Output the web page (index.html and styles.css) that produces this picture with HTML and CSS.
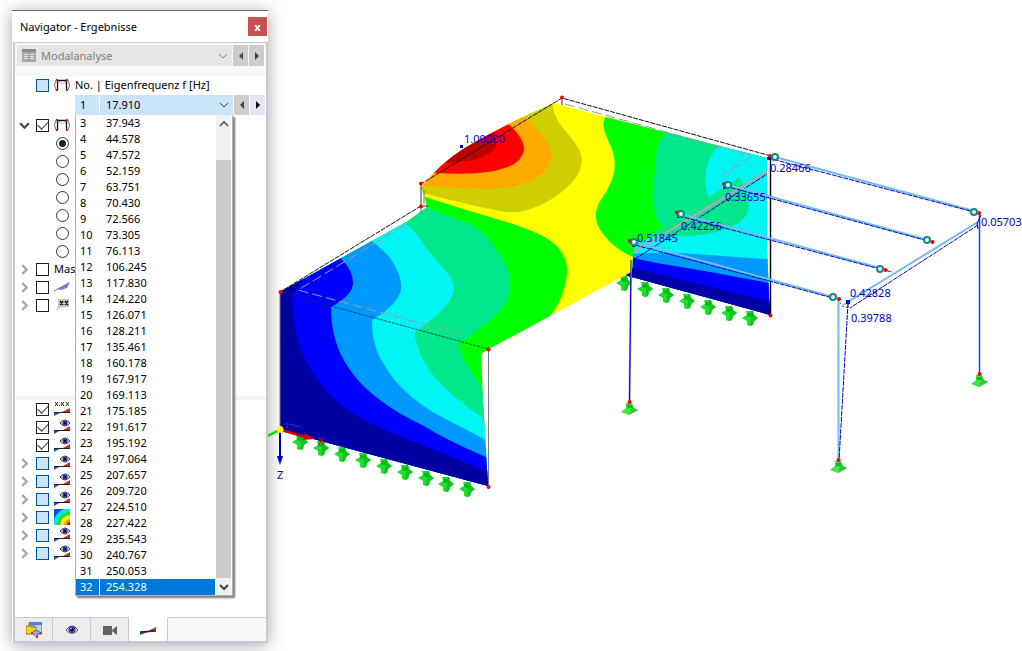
FILE: index.html
```html
<!DOCTYPE html>
<html lang="de">
<head>
<meta charset="utf-8">
<title>Navigator - Ergebnisse</title>
<link rel="stylesheet" href="styles.css">
</head>
<body>
<svg class="defs" aria-hidden="true">
  <symbol id="frame" viewBox="0 0 16 16"><path d="M2 3Q-1 8 2 13M14 3Q17 8 14 13" fill="none" stroke="#777"/><path d="M3 5Q8 8 13 5" fill="none" stroke="#bbb"/><path d="M3.500 13V3.500h9V13" fill="none" stroke="#111" stroke-width="1.300"/><path d="M2 2h2v2H2zM12 2h2v2h-2zM2 12h2v2H2zM12 12h2v2h-2z" fill="#c8202c"/></symbol>
  <symbol id="wedge" viewBox="0 0 16 16"><path d="M0 15v-4h8z" fill="#2d50b4"/><path d="M16 7v4H8z" fill="#c83214"/><path d="M0 11h16" stroke="#222"/></symbol>
  <symbol id="eyewedge" viewBox="0 0 16 16"><path d="M0 15v-4h7z" fill="#2d50b4"/><path d="M16 7v4H9z" fill="#c83214"/><path d="M0 11.500h16" stroke="#222"/><path d="M6 4Q11 -2 16 4Q11 10 6 4z" fill="#c8cdf2" stroke="#445"/><circle cx="11" cy="4" r="2.500" fill="#2b2f8f"/><circle cx="11" cy="4" r="1" fill="#000030"/></symbol>
  <symbol id="valwedge" viewBox="0 0 16 16"><path d="M0 15v-4h8z" fill="#2d50b4"/><path d="M16 7v4H8z" fill="#c83214"/><path d="M0 11.500h16" stroke="#222"/><path d="M1 1l3 4M4 1l-3 4M7 1l3 4M10 1l-3 4M12 1l3 4M15 1l-3 4M5 4.500h1" stroke="#222"/></symbol>
  <symbol id="contour" viewBox="0 0 16 16"><path d="M0 0h16v16H0z" fill="#0a50e0"/><circle cx="16" cy="16" r="17" fill="#00e5f0"/><circle cx="16" cy="16" r="13" fill="#20d830"/><circle cx="16" cy="16" r="10" fill="#fff000"/><circle cx="16" cy="16" r="6" fill="#e8a000"/><circle cx="16" cy="16" r="3" fill="#c00000"/></symbol>
  <symbol id="blade" viewBox="0 0 16 16"><path d="M3 10L16 3 13 9 7 11z" fill="#6e82ff"/><path d="M0 12Q6 9 15 4" fill="none" stroke="#777"/></symbol>
  <symbol id="tagxx" viewBox="0 0 16 16"><path d="M4 2h11v8H7l-5 4 2-5z" fill="#c8c8c8"/><path d="M6 4l3 4M9 4l-3 4M11 4l3 4M14 4l-3 4" stroke="#111" stroke-width="1.300"/></symbol>
  <symbol id="down" viewBox="0 0 10 10"><path d="M1 3l4 4 4-4" fill="none" stroke="currentColor"/></symbol>
  <symbol id="open" viewBox="0 0 10 10"><path d="M1 3l4 4 4-4" fill="none" stroke="#444" stroke-width="2"/></symbol>
  <symbol id="closed" viewBox="0 0 10 10"><path d="M3 1l4 4-4 4" fill="none" stroke="#a6a6a6" stroke-width="2"/></symbol>
  <symbol id="up" viewBox="0 0 10 10"><path d="M1 7l4-4 4 4" fill="none" stroke="#555" stroke-width="1.600"/></symbol>
  <symbol id="left" viewBox="0 0 10 10"><path d="M7 1v8L3 5z" fill="currentColor"/></symbol>
  <symbol id="right" viewBox="0 0 10 10"><path d="M3 1v8l4-4z" fill="currentColor"/></symbol>
  <symbol id="support" viewBox="-9 -9 18 18"><path d="M-4 -7L3 -7 4 -3 8 0 4 3 3 7 0 8 -3 7 -3 3 -8 0 -3 -3z" fill="#1fe02c"/><path d="M1 -7h2l1 4 4 3-4 3-1 4-3 1 1-7z" fill="#10c522"/><path d="M-3 -5h6l0 3-3 1-3-1z" fill="#0cb820"/></symbol>
</svg>
<main class="desk">
  <aside class="panel">
    <header class="title"><h1>Navigator - Ergebnisse</h1><button class="close" aria-label="Schließen">x</button></header>
    <div class="body">
      <div class="toolbar">
        <div class="case">
          <svg class="ico" viewBox="0 0 16 16"><path d="M1 1h14v13H1z" fill="#a8a8a8"/><path d="M1 1h14v3H1z" fill="#8c8c8c"/><path d="M3 6.500h4M9 6.500h4M3 8.500h4M9 8.500h4M3 10.500h4M9 10.500h4" stroke="#e4e4e4"/></svg>
          <select aria-label="Analyse" disabled><option>Modalanalyse</option></select>
          <svg class="chev"><use href="#down"/></svg>
        </div>
        <button class="step" aria-label="Vorige Analyse"><svg class="chev"><use href="#left"/></svg></button>
        <button class="step" aria-label="Nächste Analyse"><svg class="chev"><use href="#right"/></svg></button>
      </div>
      <div class="tree upper">
        <div class="row head"><i class="tw"></i><input id="no" type="checkbox" class="part"><svg class="ico"><use href="#frame"/></svg><label for="no">No. | Eigenfrequenz f [Hz]</label></div>
        <div class="modes">
          <div class="mode"><label for="mode">1</label><select id="mode"><option>17.910</option></select><svg class="chev"><use href="#down"/></svg></div>
          <button class="step" aria-label="Vorige Eigenform"><svg class="chev"><use href="#left"/></svg></button>
          <button class="step on" aria-label="Nächste Eigenform"><svg class="chev"><use href="#right"/></svg></button>
          <div class="popup">
            <ul role="listbox" aria-label="Eigenfrequenz">
              <li role="option"><b>3</b><span>37.943</span></li><li role="option"><b>4</b><span>44.578</span></li><li role="option"><b>5</b><span>47.572</span></li><li role="option"><b>6</b><span>52.159</span></li><li role="option"><b>7</b><span>63.751</span></li><li role="option"><b>8</b><span>70.430</span></li><li role="option"><b>9</b><span>72.566</span></li><li role="option"><b>10</b><span>73.305</span></li><li role="option"><b>11</b><span>76.113</span></li><li role="option"><b>12</b><span>106.245</span></li><li role="option"><b>13</b><span>117.830</span></li><li role="option"><b>14</b><span>124.220</span></li><li role="option"><b>15</b><span>126.071</span></li><li role="option"><b>16</b><span>128.211</span></li><li role="option"><b>17</b><span>135.461</span></li><li role="option"><b>18</b><span>160.178</span></li><li role="option"><b>19</b><span>167.917</span></li><li role="option"><b>20</b><span>169.113</span></li><li role="option"><b>21</b><span>175.185</span></li><li role="option"><b>22</b><span>191.617</span></li><li role="option"><b>23</b><span>195.192</span></li><li role="option"><b>24</b><span>197.064</span></li><li role="option"><b>25</b><span>207.657</span></li><li role="option"><b>26</b><span>209.720</span></li><li role="option"><b>27</b><span>224.510</span></li><li role="option"><b>28</b><span>227.422</span></li><li role="option"><b>29</b><span>235.543</span></li><li role="option"><b>30</b><span>240.767</span></li><li role="option"><b>31</b><span>250.053</span></li><li role="option" aria-selected="true" class="sel"><b>32</b><span>254.328</span></li>
            </ul>
            <div class="scroll"><button aria-label="Nach oben"><svg class="chev"><use href="#up"/></svg></button><div class="track"><div class="thumb"></div></div><button aria-label="Nach unten"><svg class="chev"><use href="#open"/></svg></button></div>
          </div>
        </div>
        <div class="row first"><svg class="tw"><use href="#open"/></svg><input type="checkbox" checked aria-label="Eigenformen"><svg class="ico"><use href="#frame"/></svg></div>
        <div class="row opt"><input type="radio" name="d" checked aria-label="Komponente 1"></div>
        <div class="row opt"><input type="radio" name="d" aria-label="Komponente 2"></div>
        <div class="row opt"><input type="radio" name="d" aria-label="Komponente 3"></div>
        <div class="row opt"><input type="radio" name="d" aria-label="Komponente 4"></div>
        <div class="row opt"><input type="radio" name="d" aria-label="Komponente 5"></div>
        <div class="row opt"><input type="radio" name="d" aria-label="Komponente 6"></div>
        <div class="row opt"><input type="radio" name="d" aria-label="Komponente 7"></div>
        <div class="row"><svg class="tw"><use href="#closed"/></svg><input id="mas" type="checkbox"><label for="mas">Mas</label></div>
        <div class="row"><svg class="tw"><use href="#closed"/></svg><input type="checkbox" aria-label="Flächen"><svg class="ico"><use href="#blade"/></svg></div>
        <div class="row"><svg class="tw"><use href="#closed"/></svg><input type="checkbox" aria-label="Werte"><svg class="ico"><use href="#tagxx"/></svg></div>
      </div>
      <div class="tree lower">
        <div class="row"><i class="tw"></i><input type="checkbox" checked aria-label="Ergebniswerte"><svg class="ico"><use href="#valwedge"/></svg></div>
        <div class="row"><i class="tw"></i><input type="checkbox" checked aria-label="Anzeige 2"><svg class="ico"><use href="#eyewedge"/></svg></div>
        <div class="row"><i class="tw"></i><input type="checkbox" checked aria-label="Anzeige 3"><svg class="ico"><use href="#eyewedge"/></svg></div>
        <div class="row"><svg class="tw"><use href="#closed"/></svg><input type="checkbox" class="part" aria-label="Anzeige 4"><svg class="ico"><use href="#eyewedge"/></svg></div>
        <div class="row"><svg class="tw"><use href="#closed"/></svg><input type="checkbox" class="part" aria-label="Anzeige 5"><svg class="ico"><use href="#eyewedge"/></svg></div>
        <div class="row"><svg class="tw"><use href="#closed"/></svg><input type="checkbox" class="part" aria-label="Anzeige 6"><svg class="ico"><use href="#eyewedge"/></svg></div>
        <div class="row"><svg class="tw"><use href="#closed"/></svg><input type="checkbox" class="part" aria-label="Isoflächen"><svg class="ico"><use href="#contour"/></svg></div>
        <div class="row"><svg class="tw"><use href="#closed"/></svg><input type="checkbox" class="part" aria-label="Anzeige 8"><svg class="ico"><use href="#eyewedge"/></svg></div>
        <div class="row"><svg class="tw"><use href="#closed"/></svg><input type="checkbox" class="part" aria-label="Anzeige 9"><svg class="ico"><use href="#eyewedge"/></svg></div>
      </div>
    </div>
    <nav class="tabs">
      <button aria-label="Daten"><svg class="ico" viewBox="0 0 16 16"><path d="M3 1h13v11H9V4H3z" fill="#b9cdf2" stroke="#55688e"/><path d="M3 0h13v3H3z" fill="#4a80e0"/><path d="M0 4h4l1 1h5v7H0z" fill="#f8cf22" stroke="#a07a00"/><path d="M6 11q3-5 9 0l-3 1-1 3z" fill="#7fb6e8" stroke="#567"/><path d="M5 10h2v2H5zM14 10h2v2h-2zM10 14h2v2h-2z" fill="#d22"/></svg></button>
      <button aria-label="Anzeige"><svg class="ico" viewBox="0 0 16 16"><path d="M2 8Q8 0 14 8Q8 15 2 8z" fill="#e4e8fb" stroke="#4a4e80"/><circle cx="8" cy="7.500" r="3.500" fill="#3a3f9c"/><circle cx="8" cy="7.500" r="1.500" fill="#05051e"/><circle cx="7" cy="6.500" r=".7" fill="#fff"/></svg></button>
      <button aria-label="Ansichten"><svg class="ico" viewBox="0 0 16 16"><path d="M1 4h9v9H1zM10 8l5-4v9l-5-4z" fill="#626262"/></svg></button>
      <button class="active" aria-label="Ergebnisse"><svg class="ico" viewBox="0 0 16 16"><path d="M0 13v-3h8z" fill="#2d50d0"/><path d="M16 5v4H8z" fill="#d23214"/><path d="M0 10l16-1" stroke="#222" stroke-width="1.500"/></svg></button>
      <div class="rest"></div>
    </nav>
  </aside>
  <svg class="scene" viewBox="268 0 754 651" preserveAspectRatio="xMinYMin meet" role="img" aria-label="Eigenform des Modells">
    <defs>
      <clipPath id="shell"><path d="M421 188Q440 163 465 148T525 116L554 103 606 117 767 158 767 250 770 315 632 277 631 272 489 349 481 354 483 400 488 486 280 430 280 292 408 221 427 207 424 195z"/></clipPath>
    </defs>
    <g>
      <use href="#support" x="291" y="433" width="18" height="18"/><use href="#support" x="312" y="439" width="18" height="18"/><use href="#support" x="333" y="445" width="18" height="18"/><use href="#support" x="354" y="451" width="18" height="18"/><use href="#support" x="375" y="457" width="18" height="18"/><use href="#support" x="396" y="463" width="18" height="18"/><use href="#support" x="417" y="469" width="18" height="18"/><use href="#support" x="437" y="475" width="18" height="18"/><use href="#support" x="458" y="480" width="18" height="18"/>
      <use href="#support" x="615" y="274" width="18" height="18"/><use href="#support" x="636" y="280" width="18" height="18"/><use href="#support" x="657" y="286" width="18" height="18"/><use href="#support" x="678" y="292" width="18" height="18"/><use href="#support" x="699" y="298" width="18" height="18"/><use href="#support" x="720" y="304" width="18" height="18"/><use href="#support" x="741" y="309" width="18" height="18"/>
      <path d="M602 283h4" stroke="#00d818" stroke-width="2"/>
    </g>
    <path d="M625 275l8-4v7z" fill="#0000a3"/>
    <g clip-path="url(#shell)">
      <path d="M270 90H790V500H270z" fill="#ff0"/>
      <path d="M400 189L425 197Q462 209 500 220T552 242Q565 252 567 267Q568 282 560 300Q557 307 550 316L500 500H270V200z" fill="#0f0"/>
      <path d="M400 200L427 207Q450 218 465 222Q485 231 493 245Q506 263 509 274Q513 290 504 305Q496 318 458 345Q464 364 482 387L500 500H270V200z" fill="#00e68a"/>
      <path d="M400 219L405 223Q415 231 421 241Q430 253 444 269Q454 280 454 289Q453 299 441 311Q432 320 414 333Q420 363 440 383Q456 400 483 418L500 500H270V219z" fill="#00f5f5"/>
      <path d="M370 239L373 242Q387 253 392 261Q402 276 401 289Q399 304 372 320Q372 348 385 366Q401 394 438 415L484 439 500 500H270V239z" fill="#09f"/>
      <path d="M338 254L341 259Q353 270 353 283Q353 295 331 307Q331 342 348 367Q369 400 424 426Q448 441 486 457L500 500H270V254z" fill="#00f"/>
      <path d="M311 270L292 294Q292 345 315 376Q335 409 387 431Q435 450 488 472L500 500H270V270z" fill="#0000a3"/>
      <path d="M553 98Q550 112 563 128Q582 149 582 160Q582 181 547 202Q524 214 506 212Q480 208 415 191V90z" fill="#cfcf00"/>
      <path d="M522 115Q552 140 552 156Q549 178 513 187Q485 191 418 186V90z" fill="#fa0"/>
      <path d="M505 121Q524 137 524 150Q520 178 434 173L415 170V90z" fill="red"/>
      <path d="M493 127Q498 144 495 148Q486 162 443 163L425 160 460 120z" fill="#b00"/>
      <path d="M612 110Q601 118 604 129Q606 137 612 149Q618 166 611 182Q607 192 600 201Q595 210 596 219Q597 229 610 242Q621 252 633 257L631 290H790V110z" fill="#0f0"/>
      <path d="M669 130Q656 140 656 159L653 190Q651 215 663 227L634 247V290H790V130z" fill="#00e68a"/>
      <path d="M722 143Q705 158 705 180Q706 192 709 197L740 177Q746 190 749 205Q749 220 727 229Q702 238 657 236Q643 239 634 249V290H790V143z" fill="#00f5f5"/>
      <path d="M633 254Q645 252 680 253L780 260V330H631z" fill="#09f"/>
      <path d="M633 258L657 263 710 272 780 285V330H631z" fill="#00f"/>
      <path d="M632 268L707 286 780 304V330H631z" fill="#0000a3"/>
    </g>
    <g fill="none">
      <g stroke="#111" stroke-dasharray="5 1"><path d="M771 156L562 98 421 184M421 206L280 292"/></g>
      <path d="M280 292L488 349" stroke="#043838" stroke-dasharray="3 1" stroke-opacity=".8"/>
      <path d="M562 98v7M421 184v22M421 206h7" stroke="#333"/>
      <path d="M421 206v8M424 190v14M488.500 350V487M280 292V430" stroke="#777"/>
      <path d="M565 104L753 156 722 175M405 225L298 290 460 334" stroke="#a09aa0" stroke-dasharray="10 4"/>
      <path d="M287 423v5M289 424l12 3" stroke="#5555bb" stroke-dasharray="2 1"/>
      <path d="M770.500 156V315" stroke="#000" stroke-width="1.500"/>
      <path d="M634 252L767 172" stroke="#aaa" stroke-width="2.500"/>
      <path d="M635 259L767 174" stroke="#00c" stroke-dasharray="5 1"/>
      <path d="M775 157L974 211M728 185L928 240M681 214L880 268M634 242L833 297M978 222L843 305M838.500 298V461" stroke="#73bde9" stroke-width="2"/>
      <path d="M768 158L974 212M725 186L928 241M679 216L880 269M635 245L833 298M978 225L850 308M848 303L839 461M848 300v8M880 269l12 3" stroke="#0000c8" stroke-dasharray="5 1"/>
      <path d="M631 272L629.500 402" stroke="#9090f0" stroke-width="2"/><path d="M631 260L629.500 402" stroke="#0000b8"/>
      <path d="M979.500 213V376" stroke="#1646e8" stroke-width="1.500"/><path d="M981 215l-4 9 1 5" stroke="#00c"/>
      <path d="M838 299l4 7 6 2" stroke="#555" stroke-dasharray="2 2"/>
    </g>
    <g fill="red"><circle cx="562" cy="97.500" r="2"/><circle cx="421" cy="183.500" r="2"/><circle cx="421" cy="206.500" r="2"/><circle cx="280.500" cy="292" r="2"/><circle cx="488.500" cy="349.500" r="2"/><circle cx="488.500" cy="487" r="2"/><circle cx="770.500" cy="315.500" r="2"/><circle cx="770" cy="156" r="2"/><circle cx="724" cy="184" r="2"/><circle cx="677" cy="212.500" r="2"/><circle cx="630" cy="241" r="2"/><circle cx="979" cy="213" r="2"/><circle cx="932.500" cy="242" r="2"/><circle cx="885.500" cy="270" r="2"/><circle cx="839" cy="299" r="2"/></g>
    <g fill="#0000d8"><path d="M460 145h3v3h-3zM767 157h3v3h-3zM723 186h3v3h-3zM677 215h3v3h-3zM846 300h4v4h-4zM632 244h3v3h-3z"/></g>
    <g fill="#e8f4f2" stroke="#108a85" stroke-width="2"><circle cx="775" cy="157" r="3"/><circle cx="728" cy="185" r="3"/><circle cx="681" cy="214" r="3"/><circle cx="634" cy="242" r="3"/><circle cx="974" cy="212" r="3"/><circle cx="927" cy="240" r="3"/><circle cx="880" cy="269" r="3"/><circle cx="833" cy="297" r="3"/></g>
    <g>
      <path d="M626 403h6l2 5 4 2-9 5-8-3 5-4z" fill="#3be83b"/><path d="M632 405l2 3 4 2-9 5z" fill="#35c53c"/><path d="M627 405h5v3h-5z" fill="#0b3"/><circle cx="629.500" cy="402" r="2" fill="red"/>
      <path d="M835 461h6l2 5 4 2-9 5-8-3 5-4z" fill="#3be83b"/><path d="M841 463l2 3 4 2-9 5z" fill="#35c53c"/><path d="M836 463h5v3h-5z" fill="#0b3"/><circle cx="838.500" cy="460" r="2" fill="red"/>
      <path d="M976 375h6l2 5 4 2-9 5-8-3 5-4z" fill="#3be83b"/><path d="M982 377l2 3 4 2-9 5z" fill="#35c53c"/><path d="M977 377h5v3h-5z" fill="#0b3"/><circle cx="979.500" cy="374" r="2" fill="red"/>
    </g>
    <path d="M268 436l11-6" stroke="#00dc00" stroke-width="2.500"/>
    <path d="M280 430v28" stroke="#0000b4" stroke-width="2"/><path d="M277 456h6l-3 9z" fill="#0000c8"/>
    <path d="M281 430l25 7" stroke="#c00" stroke-width="2.500"/><path d="M305 433l9 6-11 1z" fill="#e00000"/>
    <circle cx="280" cy="429.500" r="3.500" fill="#ff0"/>
    <g class="value"><text x="464" y="143">1.00000</text><text x="770" y="172">0.28466</text><text x="725" y="201">0.33655</text><text x="681" y="230">0.42256</text><text x="637" y="242">0.51845</text><text x="981" y="226">0.05703</text><text x="850" y="297">0.42828</text><text x="851" y="322">0.39788</text><text x="277" y="479">Z</text><text class="xaxis" x="318" y="445">X</text></g>
  </svg>
</main>
</body>
</html>
```
FILE: styles.css
```css
* { box-sizing: border-box; }
body { margin: 0; background: #fff; color: #000; font: 11px/16px "Noto Sans", "Open Sans", sans-serif; }
button, select, input { font: inherit; margin: 0; padding: 0; border: 0; border-radius: 0; }
button { display: flex; align-items: center; justify-content: center; }
.defs { position: absolute; width: 0; height: 0; }
.desk { display: flex; min-height: 100vh; align-items: stretch; }
.panel { display: flex; flex-direction: column; flex: 0 0 256px; margin: 10px 0 8px 12px; background: #fff; border-top: 1px solid #666; box-shadow: 0 2px 16px rgba(0, 0, 0, .35); }
.scene { position: relative; flex: 1; min-width: 0; align-self: flex-start; }
.title { display: flex; justify-content: space-between; align-items: center; height: 31px; padding: 0 1px 0 8px; }
.title h1 { margin: 0; font-size: 11px; font-weight: 400; }
.close { width: 19px; height: 19px; background: #c75050; color: #fff; font-weight: 700; line-height: 16px; }
.body { display: flex; flex-direction: column; flex: 1; border: 2px solid #c9c7d5; border-bottom: 0; border-top-width: 1px; margin-left: 1px; }
.toolbar { display: flex; gap: 1px; height: 33px; padding: 2px 2px 10px; background: #f7f7f7; }
.case { display: flex; flex: 1; align-items: center; padding: 0 4px; gap: 4px; background: #e5e5e5; color: #808080; }
select { flex: 1; min-width: 0; appearance: none; background: transparent; color: inherit; opacity: 1; }
.ico { width: 16px; height: 16px; flex: none; }
.chev { width: 10px; height: 10px; flex: none; }
.step { width: 15px; background: #cdcdcd; color: #444; }
.step.on { background: #e6e6f2; color: #000; }
.row { display: flex; align-items: center; height: 18px; padding-left: 4px; }
.row input + label { margin-left: 5px; }
.row.head .ico + label { margin-left: 5px; }
.row .ico { margin-left: 5px; }
.tw { width: 11px; height: 11px; margin-right: 6px; flex: none; }
input[type=checkbox] { appearance: none; width: 13px; height: 13px; background: #fff; border: 1px solid #222; display: grid; place-items: center; }
input[type=checkbox]:checked::after { content: ""; width: 9px; height: 5px; border: solid #333; border-width: 0 0 1px 1px; rotate: -45deg; margin-bottom: 3px; }
input[type=checkbox].part { background: #cce4f7; border-color: #0055a0; }
.opt { padding-left: 41px; }
input[type=radio] { appearance: none; width: 13px; height: 13px; border: 1px solid #333; border-radius: 50%; display: grid; place-items: center; }
input[type=radio]:checked::after { content: ""; width: 7px; height: 7px; border-radius: 50%; background: #222; }
.upper { flex: 1; }
.modes { position: relative; display: flex; gap: 1px; height: 20px; margin: 1px 0 1px 60px; padding-right: 1px; }
.mode { display: flex; flex: 1; align-items: center; background: #cce4f7; padding-right: 4px; }
.mode label { width: 25px; height: 16px; padding-left: 5px; border-right: 1px solid #fff; }
.mode select { padding-left: 6px; }
.mode .chev { color: #444; }
.popup { position: absolute; z-index: 2; top: 20px; left: 0; right: 33px; display: flex; background: #fff; border: solid #b4b4b4; border-width: 0 1px 1px; box-shadow: 2px 2px 2px #777; }
.popup ul { flex: 1; margin: 0; padding: 0; list-style: none; }
.popup li { display: flex; height: 16px; }
.popup b { width: 24px; padding-left: 4px; border-right: 1px solid transparent; font-weight: 400; }
.popup span { padding-left: 6px; }
.sel { background: #0078d7; color: #fff; }
.popup .sel b { border-color: #fff; }
.scroll { display: flex; flex-direction: column; width: 17px; padding: 0 1px; background: #fff; }
.scroll button { height: 17px; background: #f0f0f0; }
.track { display: flex; flex: 1; padding-top: 28px; background: #f0f0f0; }
.thumb { flex: 1; background: #cdcdcd; }
.lower { min-height: 221px; border-top: 4px solid #f5f5f5; }
.tabs { display: flex; height: 26px; margin-left: 1px; border: 2px solid #c9c7d5; border-top: 0; }
.tabs button { width: 38px; background: #ececec; border: solid #c9c7d5; border-width: 1px 1px 0 0; }
.tabs .active { width: 39px; background: #fff; border-top-color: #fff; }
.rest { flex: 1; background: #f7f7f7; border-top: 1px solid #c9c7d5; }
.value { font: 11px "Noto Sans", sans-serif; fill: #0000c8; }
.xaxis { fill: #e00000; }
```
